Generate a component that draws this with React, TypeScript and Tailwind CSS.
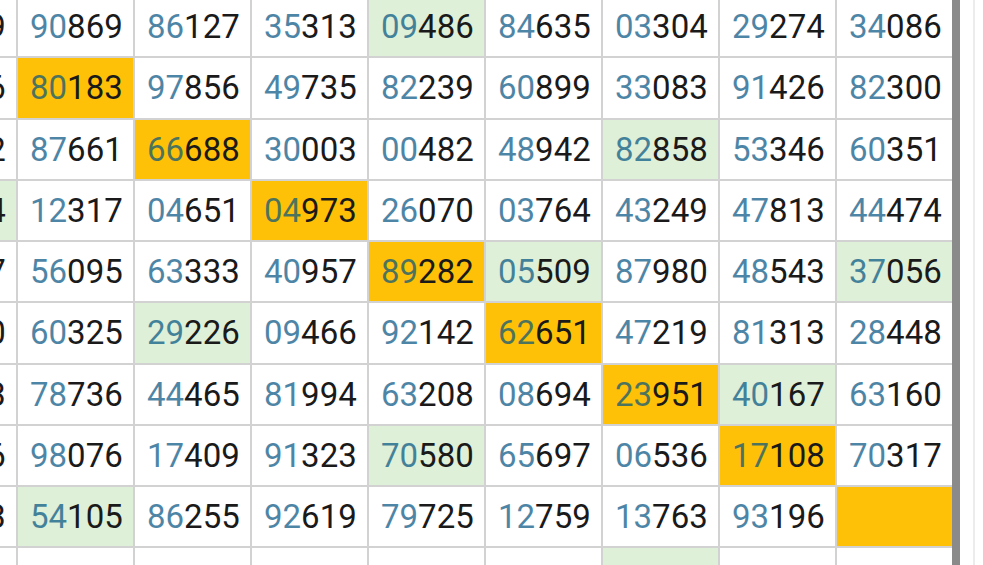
import React from 'react';

type Mark = 'o' | 'g' | '';

// each row: [number, mark] for the cut-off column plus 8 visible ones
const rows: [string, Mark][][] = [
  [['71549', ''], ['90869', ''], ['86127', ''], ['35313', ''], ['09486', 'g'], ['84635', ''], ['03304', ''], ['29274', ''], ['34086', '']],
  [['38216', ''], ['80183', 'o'], ['97856', ''], ['49735', ''], ['82239', ''], ['60899', ''], ['33083', ''], ['91426', ''], ['82300', '']],
  [['55302', ''], ['87661', ''], ['66688', 'o'], ['30003', ''], ['00482', ''], ['48942', ''], ['82858', 'g'], ['53346', ''], ['60351', '']],
  [['19674', 'g'], ['12317', ''], ['04651', ''], ['04973', 'o'], ['26070', ''], ['03764', ''], ['43249', ''], ['47813', ''], ['44474', '']],
  [['62827', ''], ['56095', ''], ['63333', ''], ['40957', ''], ['89282', 'o'], ['05509', 'g'], ['87980', ''], ['48543', ''], ['37056', 'g']],
  [['94110', ''], ['60325', ''], ['29226', 'g'], ['09466', ''], ['92142', ''], ['62651', 'o'], ['47219', ''], ['81313', ''], ['28448', '']],
  [['27583', ''], ['78736', ''], ['44465', ''], ['81994', ''], ['63208', ''], ['08694', ''], ['23951', 'o'], ['40167', 'g'], ['63160', '']],
  [['80436', ''], ['98076', ''], ['17409', ''], ['91323', ''], ['70580', 'g'], ['65697', ''], ['06536', ''], ['17108', 'o'], ['70317', '']],
  [['45913', ''], ['54105', 'g'], ['86255', ''], ['92619', ''], ['79725', ''], ['12759', ''], ['13763', ''], ['93196', ''], ['', 'o']],
  [['36720', ''], ['21584', ''], ['70962', ''], ['58341', ''], ['04417', ''], ['66203', ''], ['39528', 'g'], ['85071', ''], ['12690', '']],
];

function Cell({ value, mark }: { value: string; mark: Mark }) {
  const bg = mark === 'o' ? 'bg-[#ffc107]' : mark === 'g' ? 'bg-[#dff0d8]' : 'bg-white';
  return (
    <div className={`${bg} h-[59.25px] flex items-center pl-[12px] text-[33px] leading-none`}>
      <span className="text-[#005280]/70">{value.slice(0, 2)}</span>
      <span className="text-[#1a1a1a]">{value.slice(2)}</span>
    </div>
  );
}

export default function App() {
  return (
    <div
      className="w-[983px] h-[565px] overflow-hidden bg-white flex"
      style={{ fontFamily: 'Roboto, "Noto Sans", sans-serif' }}
    >
      <div className="flex-none w-[1051px] ml-[-99px] mt-[-3px] grid grid-cols-[repeat(9,115px)] gap-[2px] bg-[#d2d2d2] self-start">
        {rows.map((row, r) =>
          row.map(([value, mark], c) => <Cell key={`${r}-${c}`} value={value} mark={mark} />)
        )}
      </div>
      <div className="flex-none w-[8px] bg-[#8a8a8a]" />
      <div className="flex-none w-[13px]" />
      <div className="flex-none w-[2px] bg-[#ececec]" />
      <div className="flex-1" />
    </div>
  );
}
